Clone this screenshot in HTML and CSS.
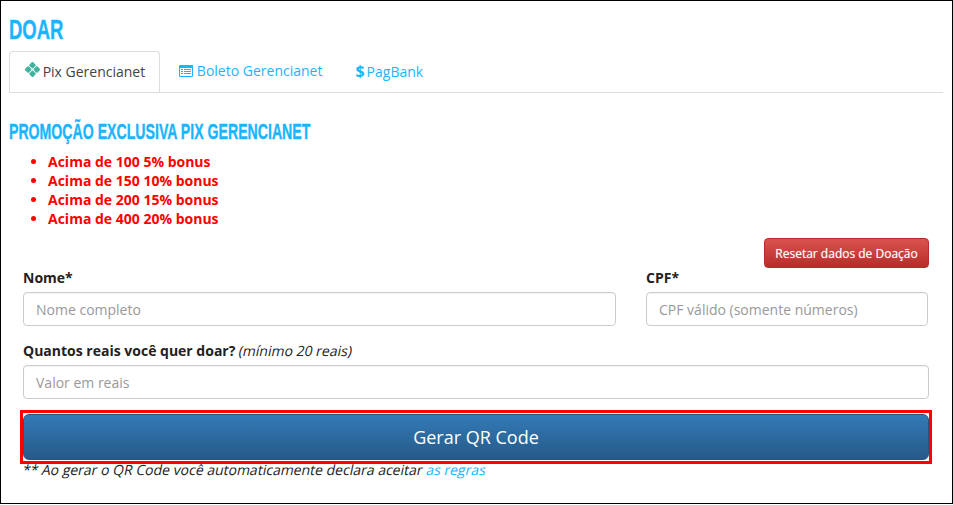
FILE: index.html
```html
<!DOCTYPE html>
<html lang="pt-BR">
<head>
<meta charset="UTF-8">
<meta name="viewport" content="width=device-width, initial-scale=1.0">
<title>Doar</title>
<link rel="stylesheet" href="styles.css">
</head>
<body>
<div class="page">
  <h1>DOAR</h1>
  <ul class="tabs">
    <li class="tab active">
      <svg class="icon-pix" width="15" height="15" viewBox="0 0 16 16"><g fill="#3fb5a0"><rect x="5.2" y="0.6" width="5.6" height="5.6" rx="1.2" transform="rotate(45 8 3.4)"/><rect x="5.2" y="9.8" width="5.6" height="5.6" rx="1.2" transform="rotate(45 8 12.6)"/><rect x="0.6" y="5.2" width="5.6" height="5.6" rx="1.2" transform="rotate(45 3.4 8)"/><rect x="9.8" y="5.2" width="5.6" height="5.6" rx="1.2" transform="rotate(45 12.6 8)"/></g></svg>
      Pix Gerencianet
    </li>
    <li class="tab">
      <svg width="14" height="12" viewBox="0 0 14 12"><path fill-rule="evenodd" fill="#1ab5ff" d="M1 0h12a1 1 0 0 1 1 1v10a1 1 0 0 1-1 1H1a1 1 0 0 1-1-1V1a1 1 0 0 1 1-1zM1 3v8h12V3zM2 4h2v1H2zM5 4h7v1H5zM2 6h2v1H2zM5 6h7v1H5zM2 8h2v1H2zM5 8h7v1H5z"/></svg>
      Boleto Gerencianet
    </li>
    <li class="tab"><b class="dollar">$</b>PagBank</li>
  </ul>

  <h2>PROMOÇÃO EXCLUSIVA PIX GERENCIANET</h2>
  <ul class="bonus">
    <li>Acima de 100 5% bonus</li>
    <li>Acima de 150 10% bonus</li>
    <li>Acima de 200 15% bonus</li>
    <li>Acima de 400 20% bonus</li>
  </ul>

  <div class="reset-row"><button class="btn-reset">Resetar dados de Doação</button></div>

  <form class="form">
    <div class="row">
      <div class="field name">
        <label>Nome*</label>
        <input type="text" placeholder="Nome completo">
      </div>
      <div class="field cpf">
        <label>CPF*</label>
        <input type="text" placeholder="CPF válido (somente números)">
      </div>
    </div>
    <div class="field">
      <label>Quantos reais você quer doar? <em>(mínimo 20 reais)</em></label>
      <input type="text" placeholder="Valor em reais">
    </div>
    <div class="submit-box"><button type="button" class="btn-submit">Gerar QR Code</button></div>
    <p class="note">** Ao gerar o QR Code você automaticamente declara aceitar <a href="#">as regras</a></p>
  </form>
</div>
</body>
</html>
```
FILE: styles.css
```css
html, body {margin:0; padding:0; background:#fff;}
body {font-family:'Open Sans', sans-serif; font-size:14px; color:#222;}
.page {box-sizing:border-box; height:504px; border:1px solid #000; padding:0 9px 0 8px; overflow:hidden;}

/* no condensed face installed, so squeeze the headings */
h1, h2 {font-family:'Liberation Sans', sans-serif; font-weight:bold; color:#1ab5ff; margin:0; transform-origin:left center; white-space:nowrap; -webkit-text-stroke:.4px #1ab5ff;}
h1 {font-size:28px; line-height:32px; margin-top:13px; transform:scaleX(.66);}
h2 {font-size:22px; line-height:24px; margin-top:27px; transform:scaleX(.642);}

.tabs {list-style:none; margin:5px 0 0; padding:0; display:flex; border-bottom:1px solid #ddd; height:41px;}
.tab {padding:0 14px 0 19px; line-height:40px; color:#1ab5ff; white-space:nowrap;}
.tab svg {vertical-align:-1px;}
.tab.active {color:#444; border:1px solid #ddd; border-bottom:none; border-radius:4px 4px 0 0; background:#fff; height:41px; padding:0 14px 0 15px; box-sizing:border-box; line-height:39px;}
.tab .icon-pix {vertical-align:0; margin-right:-1px;}
.dollar {font-weight:bold; font-size:16px; margin-right:2px;}

.bonus {margin:8px 0 0; padding:0 0 0 39px; color:#f00; font-weight:bold; line-height:19px;}

.reset-row {display:flex; justify-content:flex-end; padding-right:14px; margin-top:10px;}
.btn-reset {width:165px; height:30px; padding:0; font:12px 'Open Sans', sans-serif; color:#fff; background:linear-gradient(#d9534f, #b92c28); border:1px solid #b92c28; border-radius:4px; text-shadow:0 0 1px rgba(255,255,255,.5);}

.form {padding:0 14px 0 14px;}
.row {display:flex; gap:30px;}
.field.name {width:593px;}
.field.cpf {width:282px;}
.field label {display:block; font-weight:bold; line-height:20px; margin-bottom:4px;}
/* the original shows slanted regular Open Sans, not the true italic */
.field label em {display:inline-block; font-style:normal; font-weight:normal; transform:skewX(-12deg);}
.field {margin-bottom:15px;}
.field input {box-sizing:border-box; display:block; width:100%; height:34px; padding:0 12px; font:14px 'Open Sans', sans-serif; border:1px solid #ccc; border-radius:4px; box-shadow:inset 0 1px 1px rgba(0,0,0,.05);}
.field input::placeholder {color:#999;}

.submit-box {margin:-4px -3px 0; border:3px solid #f00; padding:1px 0; height:54px; box-sizing:border-box; display:flex;}
.btn-submit {width:100%; height:46px; padding:0; font:18px 'Open Sans', sans-serif; color:#fff; background:linear-gradient(#337ab7, #265a88); border:1px solid #245580; border-radius:6px;}

.note {margin:-4px 0 0; line-height:20px; transform:skewX(-12deg); transform-origin:left center;}
.note a {color:#1ab5ff; text-decoration:none;}
```
